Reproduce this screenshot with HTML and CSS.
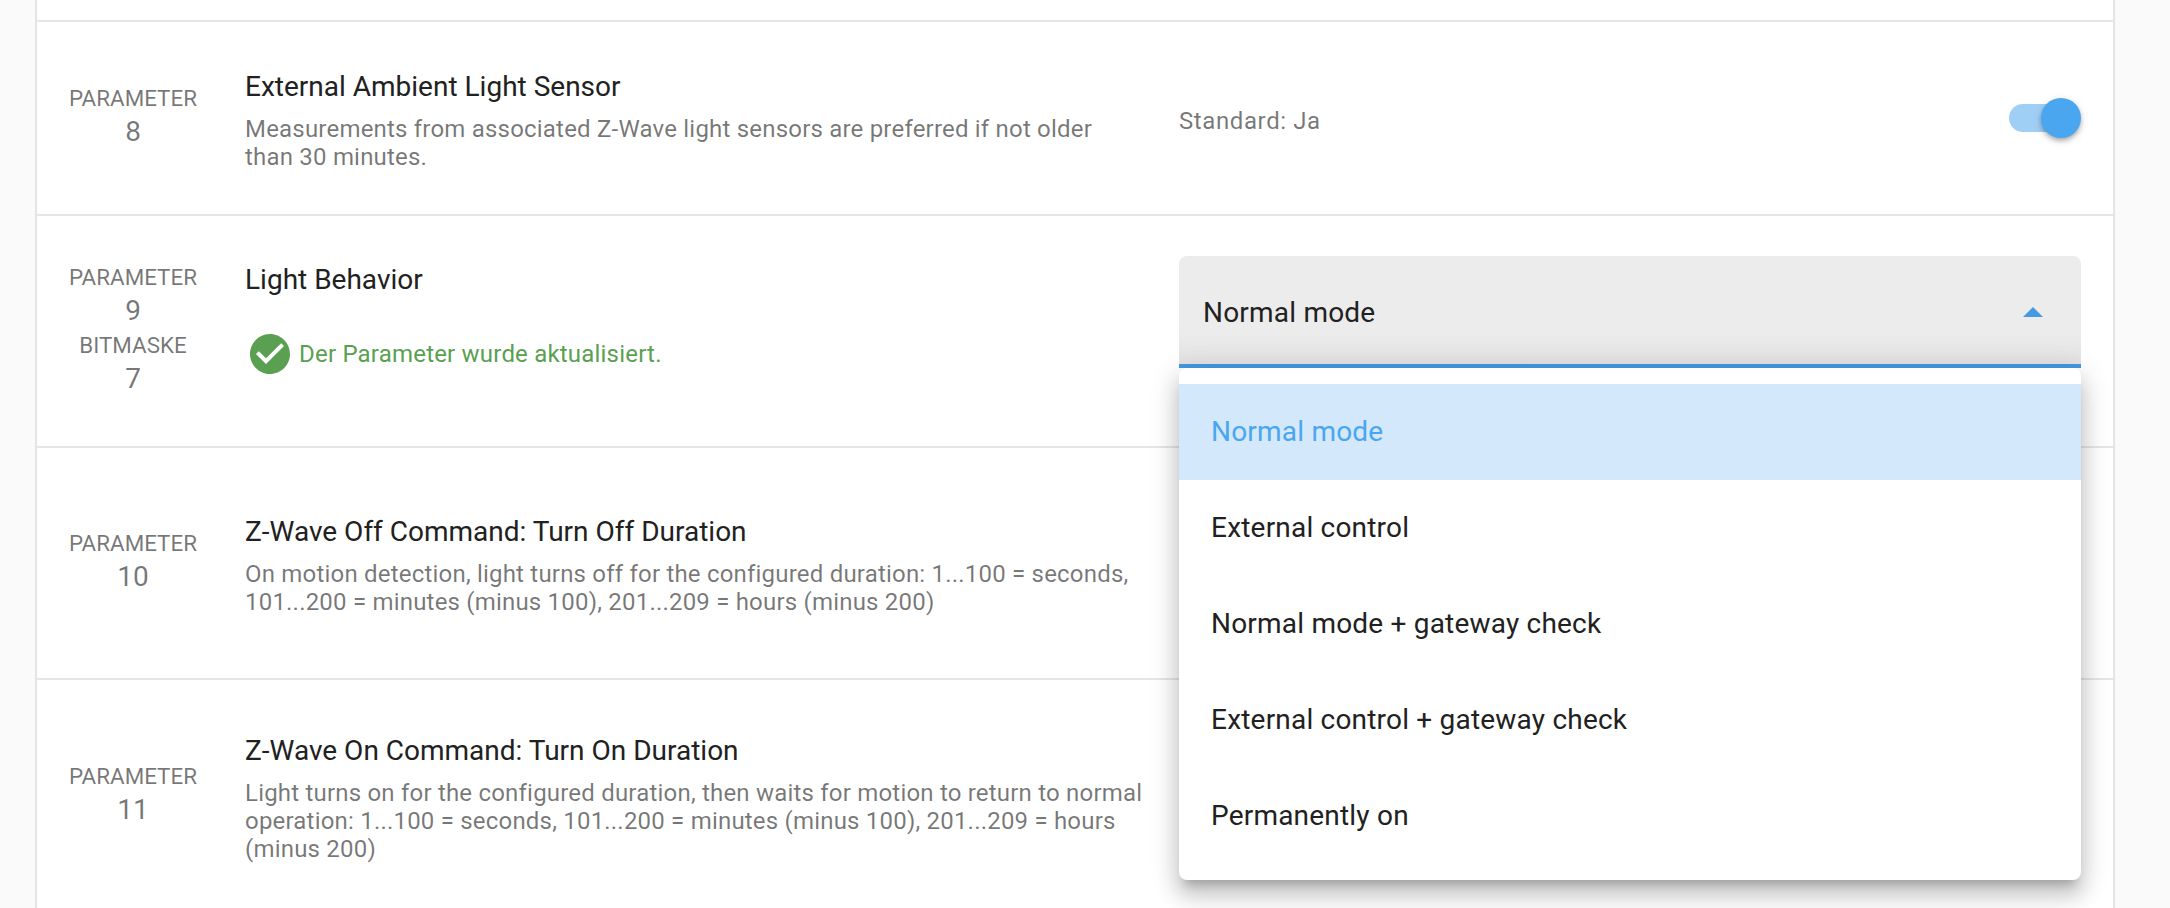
FILE: index.html
```html
<!DOCTYPE html>
<html lang="de">
<head>
<meta charset="utf-8">
<title>Z-Wave Parameter</title>
<link rel="stylesheet" href="styles.css">
</head>
<body>
<main class="card">
  <div class="stub"></div>

  <section class="row row-a">
    <div class="param"><span class="label">Parameter</span><span class="num">8</span></div>
    <div class="text">
      <h3 class="title">External Ambient Light Sensor</h3>
      <p class="desc">Measurements from associated Z-Wave light sensors are preferred if not older than 30 minutes.</p>
    </div>
    <div class="control control-toggle">
      <span class="default">Standard: Ja</span>
      <span class="switch"><span class="track"></span><span class="thumb"></span></span>
    </div>
  </section>

  <section class="row row-b">
    <div class="param">
      <span class="label">Parameter</span><span class="num">9</span>
      <span class="label">Bitmaske</span><span class="num">7</span>
    </div>
    <div class="text text-b">
      <h3 class="title">Light Behavior</h3>
      <p class="status">
        <svg class="status-icon" viewBox="0 0 24 24" width="48" height="48"><path d="M12 2C6.5 2 2 6.5 2 12S6.5 22 12 22 22 17.5 22 12 17.5 2 12 2M10 17L5 12L6.41 10.59L10 14.17L17.59 6.58L19 8L10 17Z"/></svg>
        <span>Der Parameter wurde aktualisiert.</span>
      </p>
    </div>
    <div class="control control-select">
      <div class="select">
        <span class="select-value">Normal mode</span>
        <span class="caret"></span>
      </div>
      <ul class="menu">
        <li class="item selected">Normal mode</li>
        <li class="item">External control</li>
        <li class="item">Normal mode + gateway check</li>
        <li class="item">External control + gateway check</li>
        <li class="item">Permanently on</li>
      </ul>
    </div>
  </section>

  <section class="row row-c">
    <div class="param"><span class="label">Parameter</span><span class="num">10</span></div>
    <div class="text">
      <h3 class="title">Z-Wave Off Command: Turn Off Duration</h3>
      <p class="desc">On motion detection, light turns off for the configured duration: 1...100 = seconds, 101...200 = minutes (minus 100), 201...209 = hours (minus 200)</p>
    </div>
    <div class="control"></div>
  </section>

  <section class="row row-d">
    <div class="param"><span class="label">Parameter</span><span class="num">11</span></div>
    <div class="text">
      <h3 class="title">Z-Wave On Command: Turn On Duration</h3>
      <p class="desc">Light turns on for the configured duration, then waits for motion to return to normal operation: 1...100 = seconds, 101...200 = minutes (minus 100), 201...209 = hours (minus 200)</p>
    </div>
    <div class="control"></div>
  </section>
</main>
</body>
</html>
```
FILE: styles.css
```css
html, body {
  margin: 0;
  height: 908px;
  overflow: hidden;
  background: #fafafa;
  font-family: Roboto, "Liberation Sans", sans-serif;
}
.card {
  box-sizing: border-box;
  width: 2080px;
  height: 908px;
  margin-left: 35px;
  background: #fff;
  border-left: 2px solid #e4e4e4;
  border-right: 2px solid #e4e4e4;
}
.stub {
  height: 20px;
  border-bottom: 2px solid #e6e6e6;
}
.row {
  display: flex;
  align-items: center;
  box-sizing: border-box;
  padding: 0 32px;
  border-bottom: 2px solid #e6e6e6;
}
.row-a { height: 194px; }
.row-b { height: 232px; }
.row-c { height: 232px; }
.row-d { height: 232px; border-bottom: 0; }
.param {
  flex: 0 0 127px;
  display: flex;
  flex-direction: column;
  align-items: center;
  color: rgba(0, 0, 0, 0.54);
}
.label {
  font-size: 22.4px;
  line-height: 28px;
  text-transform: uppercase;
}
.num {
  font-size: 28px;
  line-height: 40px;
}
.text {
  flex: 0 0 899px;
  margin-left: 48px;
  padding-bottom: 3px;
}
.title {
  margin: 0;
  font-size: 28px;
  font-weight: 400;
  line-height: 48px;
  color: #212121;
}
.desc {
  margin: 4px 0 0;
  font-size: 24px;
  line-height: 28px;
  letter-spacing: 0.2px;
  color: rgba(0, 0, 0, 0.54);
}
.text-b { padding-bottom: 28px; }
.status {
  display: flex;
  align-items: center;
  gap: 5px;
  margin: 26px 0 0;
  font-size: 24px;
  letter-spacing: 0.2px;
  color: #5a9f52;
}
.status-icon { fill: #5a9f52; margin-left: 1px; }
.control {
  flex: 1;
  margin-left: 35px;
  position: relative;
}
.control-toggle {
  display: flex;
  align-items: center;
  justify-content: space-between;
}
.control-select {
  align-self: flex-start;
  margin-top: 40px;
}
.default {
  margin-top: 5px;
  font-size: 24px;
  letter-spacing: 0.6px;
  color: rgba(0, 0, 0, 0.54);
}
.switch {
  display: block;
  position: relative;
  width: 72px;
  height: 40px;
}
.track {
  position: absolute;
  left: 0;
  top: 6px;
  width: 60px;
  height: 28px;
  border-radius: 14px;
  background: #a0cff6;
}
.thumb {
  position: absolute;
  right: 0;
  top: 0;
  width: 40px;
  height: 40px;
  border-radius: 50%;
  background: #4aa6ee;
  box-shadow: 0 4px 6px -2px rgba(0, 0, 0, 0.2), 0 2px 4px rgba(0, 0, 0, 0.14), 0 2px 10px rgba(0, 0, 0, 0.12);
}
.select {
  display: flex;
  align-items: center;
  justify-content: space-between;
  box-sizing: border-box;
  height: 112px;
  padding: 4px 38px 0 24px;
  border-radius: 8px 8px 0 0;
  border-bottom: 4px solid #4499e2;
  background: linear-gradient(#ececec 72%, #e2e2e2);
  font-size: 28px;
  letter-spacing: 0.2px;
  color: #212121;
}
.caret {
  width: 0;
  height: 0;
  border-left: 10px solid transparent;
  border-right: 10px solid transparent;
  border-bottom: 10px solid #4499e2;
}
.menu {
  position: absolute;
  top: 100%;
  left: 0;
  right: 0;
  z-index: 5;
  margin: 0;
  padding: 16px 0;
  list-style: none;
  background: #fff;
  border-radius: 8px;
  box-shadow: 0 10px 10px -6px rgba(0, 0, 0, 0.2), 0 16px 20px 2px rgba(0, 0, 0, 0.14), 0 6px 28px 4px rgba(0, 0, 0, 0.12);
}
.item {
  height: 96px;
  padding: 0 32px;
  font-size: 28px;
  line-height: 96px;
  letter-spacing: 0.2px;
  color: #212121;
}
.selected {
  background: #d3e8fa;
  color: #4aa6ee;
}
```
